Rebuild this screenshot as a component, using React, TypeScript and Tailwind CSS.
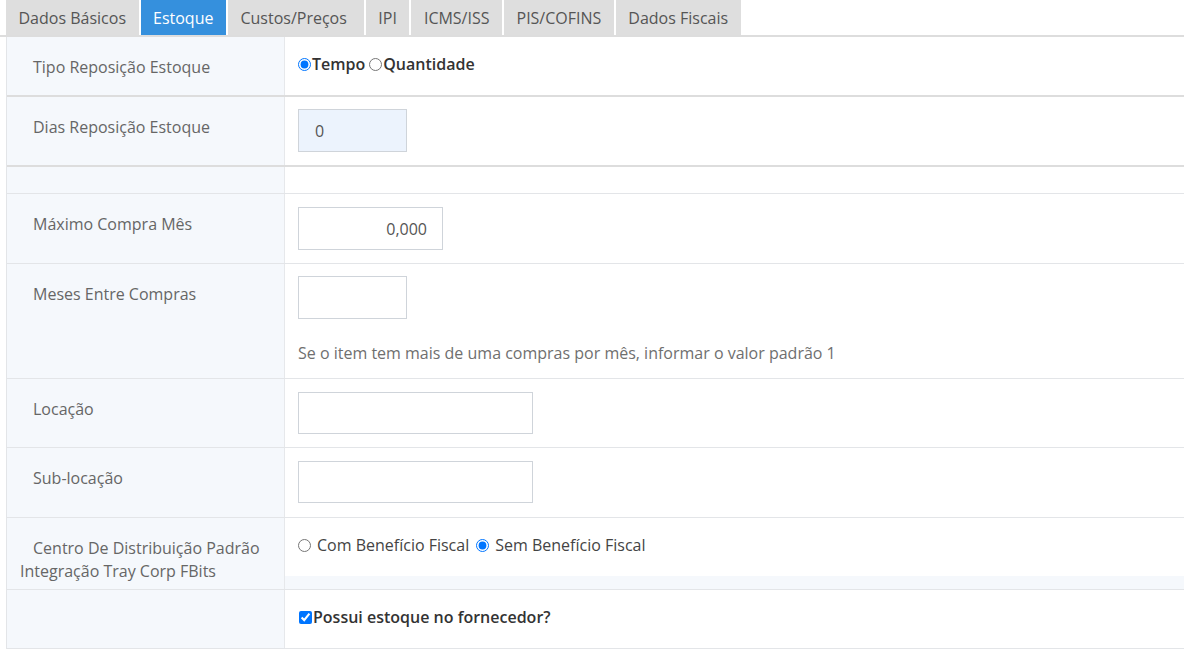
import React from 'react';

const tabs = ['Dados Básicos', 'Estoque', 'Custos/Preços', 'IPI', 'ICMS/ISS', 'PIS/COFINS', 'Dados Fiscais'];

const Label: React.FC<{ children?: React.ReactNode; className?: string }> = ({ children, className }) => (
  <div className={`w-[278px] shrink-0 self-stretch border-r border-[#e6e8eb] bg-[#f5f8fc] text-[16px] leading-[20px] text-[#666] ${className ?? 'pl-[26px] pt-[20px]'}`}>
    {children}
  </div>
);

export default function App() {
  return (
    <div className="h-[665px] w-[1184px] overflow-hidden bg-white text-[16px]" style={{ fontFamily: '"Open Sans", "Noto Sans", sans-serif' }}>
      {/* tabs */}
      <div className="flex h-[37px] gap-[2px] border-b-2 border-[#dddddd] pl-[6px]">
        {tabs.map(t => (
          <div
            key={t}
            className={`flex h-[35px] items-center pl-[12.5px] text-[16px] ${t === 'Custos/Preços' ? 'pr-[17px]' : 'pr-[12.5px]'} ${
              t === 'Estoque' ? 'bg-[#3590dd] text-white' : 'bg-[#dedede] text-[#555]'
            }`}
          >
            {t}
          </div>
        ))}
      </div>

      <div className="ml-[6px] border-l border-[#e3e5e8]">
        {/* Tipo reposição */}
        <div className="flex h-[60px] border-b-2 border-[#dddddd]">
          <Label>Tipo Reposição Estoque</Label>
          <div className="flex items-start pl-[13px] pt-[15px] text-[16px] font-semibold text-[#333]">
            <label className="flex items-center">
              <input type="radio" name="tipo" defaultChecked className="m-0 mr-[1px] h-[13px] w-[13px]" />
              Tempo
            </label>
            <label className="ml-[4px] flex items-center">
              <input type="radio" name="tipo" className="m-0 mr-[1px] h-[13px] w-[13px]" />
              Quantidade
            </label>
          </div>
        </div>

        {/* Dias reposição */}
        <div className="flex h-[70px] border-b-2 border-[#dddddd]">
          <Label>Dias Reposição Estoque</Label>
          <div className="pl-[13px] pt-[12px]">
            <div className="flex h-[43px] w-[109px] items-center border border-[#cfd4da] bg-[#ecf3fd] pl-[16px] text-[16px] text-[#555]">0</div>
          </div>
        </div>

        {/* vazio */}
        <div className="flex h-[27px] border-b border-[#e3e5e8]">
          <Label className="" />
          <div />
        </div>

        {/* Máximo compra */}
        <div className="flex h-[70px] border-b border-[#e3e5e8]">
          <Label>Máximo Compra Mês</Label>
          <div className="pl-[13px] pt-[13px]">
            <div className="flex h-[43px] w-[145px] items-center justify-end border border-[#cfd4da] bg-white pr-[15px] text-[16px] text-[#555]">0,000</div>
          </div>
        </div>

        {/* Meses entre compras */}
        <div className="flex h-[115px] border-b border-[#e3e5e8]">
          <Label>Meses Entre Compras</Label>
          <div className="pl-[13px] pt-[12px]">
            <div className="h-[43px] w-[109px] border border-[#cfd4da] bg-white" />
            <div className="mt-[24px] text-[16px] leading-[20px] text-[#6f6f6f]">
              Se o item tem mais de uma compras por mês, informar o valor padrão 1
            </div>
          </div>
        </div>

        {/* Locação */}
        <div className="flex h-[69px] border-b border-[#e3e5e8]">
          <Label>Locação</Label>
          <div className="pl-[13px] pt-[13px]">
            <div className="h-[42px] w-[235px] border border-[#cfd4da] bg-white" />
          </div>
        </div>

        {/* Sub-locação */}
        <div className="flex h-[70px] border-b border-[#e3e5e8]">
          <Label>Sub-locação</Label>
          <div className="pl-[13px] pt-[13px]">
            <div className="h-[42px] w-[235px] border border-[#cfd4da] bg-white" />
          </div>
        </div>

        {/* Centro distribuição */}
        <div className="flex h-[72px] items-start border-b border-[#e3e5e8] bg-[#f5f8fc]">
          <Label className="pl-[13px] pt-[19px] leading-[23px] indent-[13px]">
            Centro De Distribuição Padrão Integração Tray Corp FBits
          </Label>
          <div className="flex h-[58px] flex-1 items-start bg-white pl-[13px] pt-[15px] text-[16px] text-[#444]">
            <label className="flex items-center">
              <input type="radio" name="centro" className="m-0 mr-[6px] h-[13px] w-[13px]" />
              Com Benefício Fiscal
            </label>
            <label className="ml-[7px] flex items-center">
              <input type="radio" name="centro" defaultChecked className="m-0 mr-[6px] h-[13px] w-[13px]" />
              Sem Benefício Fiscal
            </label>
          </div>
        </div>

        {/* Possui estoque */}
        <div className="flex h-[59px] border-b border-[#e3e5e8]">
          <Label className="" />
          <div className="flex items-start pl-[14px] pt-[15px] text-[16px] font-semibold text-[#333]">
            <label className="flex items-center">
              <input type="checkbox" defaultChecked className="m-0 mr-[1px] h-[13px] w-[13px]" />
              Possui estoque no fornecedor?
            </label>
          </div>
        </div>
      </div>
    </div>
  );
}
